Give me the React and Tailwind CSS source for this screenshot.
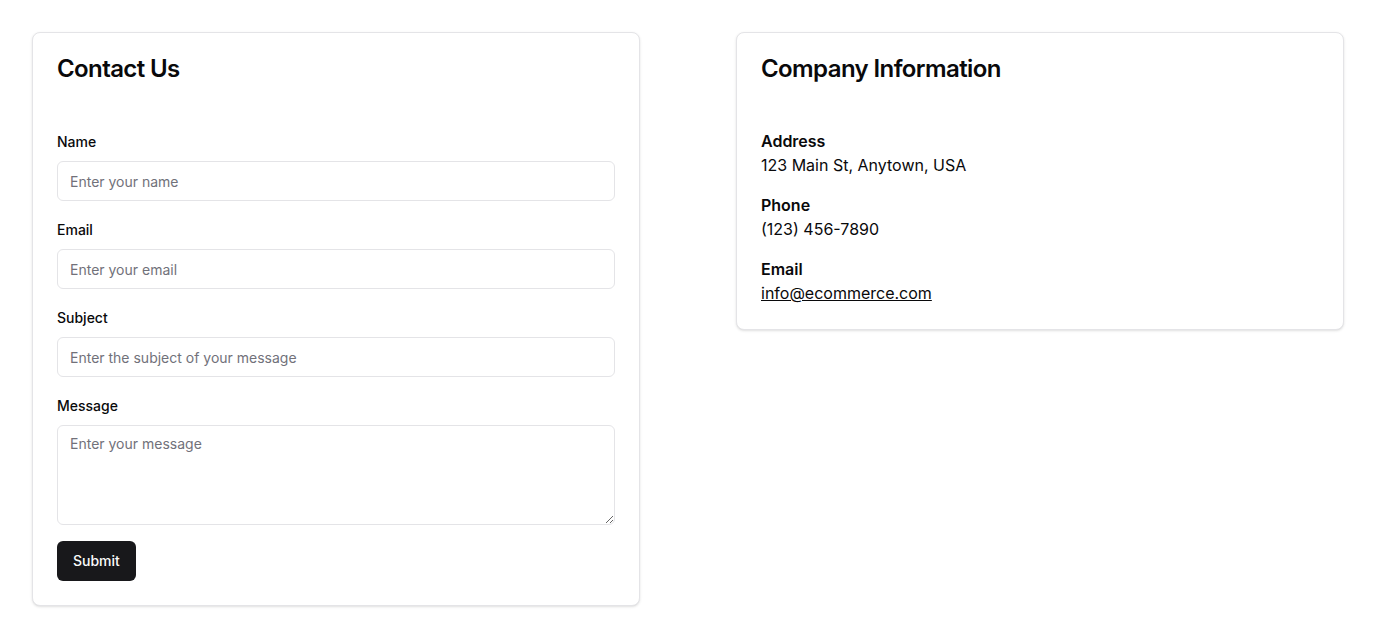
import React from 'react';

const fields = [
  { id: 'name', label: 'Name', placeholder: 'Enter your name' },
  { id: 'email', label: 'Email', placeholder: 'Enter your email' },
  { id: 'subject', label: 'Subject', placeholder: 'Enter the subject of your message' },
];

const info = [
  { label: 'Address', value: '123 Main St, Anytown, USA' },
  { label: 'Phone', value: '(123) 456-7890' },
  { label: 'Email', value: 'info@ecommerce.com', link: true },
];

const App = () => {
  return (
    <div className="min-h-screen bg-white p-8 font-['Inter',sans-serif] text-[#09090b]">
      <div className="grid grid-cols-2 items-start gap-24">
        {/* Contact form */}
        <div className="rounded-lg border border-[#e4e4e7] bg-white shadow-sm">
          <div className="p-6">
            <h2 className="text-2xl font-semibold leading-none tracking-tight">Contact Us</h2>
          </div>
          <form className="px-6 pt-6 pb-6" onSubmit={(e) => e.preventDefault()}>
            {fields.map((f) => (
              <div key={f.id} className="mb-4">
                <label htmlFor={f.id} className="mb-[7px] block pt-px text-sm font-medium leading-6">
                  {f.label}
                </label>
                <input
                  id={f.id}
                  placeholder={f.placeholder}
                  className="block h-10 w-full rounded-md border border-[#e4e4e7] bg-white px-3 text-sm outline-none placeholder:text-[#71717a]"
                />
              </div>
            ))}
            <div className="mb-4">
              <label htmlFor="message" className="mb-[7px] block pt-px text-sm font-medium leading-6">
                Message
              </label>
              <textarea
                id="message"
                placeholder="Enter your message"
                className="block h-[100px] w-full rounded-md border border-[#e4e4e7] bg-white px-3 py-2 text-sm leading-5 outline-none placeholder:text-[#71717a]"
              />
            </div>
            <button
              type="submit"
              className="h-10 rounded-md bg-[#18181b] px-4 text-sm font-medium text-[#fafafa]"
            >
              Submit
            </button>
          </form>
        </div>

        {/* Company info */}
        <div className="rounded-lg border border-[#e4e4e7] bg-white shadow-sm">
          <div className="p-6">
            <h2 className="text-2xl font-semibold leading-none tracking-tight">Company Information</h2>
          </div>
          <div className="flex flex-col gap-4 px-6 pt-6 pb-6">
            {info.map((item) => (
              <div key={item.label}>
                <p className="text-base font-semibold leading-6">{item.label}</p>
                {item.link ? (
                  <a href="#" className="text-base leading-6 underline">
                    {item.value}
                  </a>
                ) : (
                  <p className="text-base leading-6">{item.value}</p>
                )}
              </div>
            ))}
          </div>
        </div>
      </div>
    </div>
  );
};

export default App;
